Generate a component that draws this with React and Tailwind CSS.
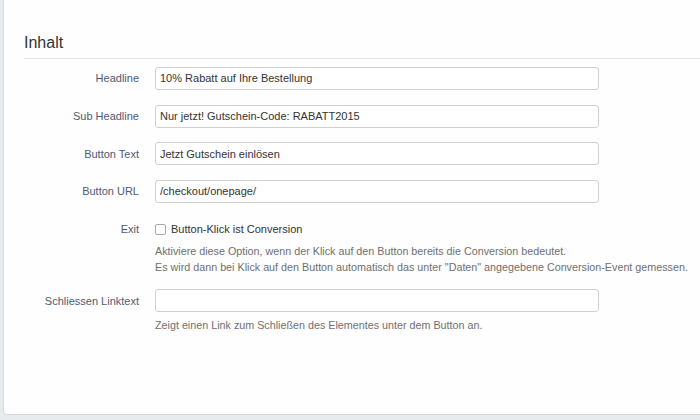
import React from "react";

const font = { fontFamily: '"Liberation Sans", Arial, sans-serif' };

function Row({ label, value }) {
  return (
    <div className="flex items-center">
      <div className="w-[135px] text-right text-[11px] text-[#4f5a72]">{label}</div>
      <div className="ml-[16px] w-[444px] h-[23px] border border-[#d0d0d0] rounded-[3px] bg-white flex items-center pl-[4px] text-[11px] text-[#333]">
        {value}
      </div>
    </div>
  );
}

export default function App() {
  return (
    <div className="w-[700px] h-[420px] bg-[#e8ebee] pl-[3px] pb-[5px] overflow-hidden" style={font}>
      <div className="h-[415px] bg-[#fefefe] border-l border-b border-[#d3dce4] rounded-bl-[4px]">
        <div className="ml-[20px] pt-[34px] pb-[6px] border-b border-[#e6e6e6]">
          <h2 className="text-[16px] leading-[18px] text-[#333] font-normal">Inhalt</h2>
        </div>
        <div className="mt-[8px] flex flex-col gap-[14.7px]">
          <Row label="Headline" value="10% Rabatt auf Ihre Bestellung" />
          <Row label="Sub Headline" value="Nur jetzt! Gutschein-Code: RABATT2015" />
          <Row label="Button Text" value="Jetzt Gutschein einlösen" />
          <Row label="Button URL" value="/checkout/onepage/" />
          <div>
            <div className="flex items-center h-[23px]">
              <div className="w-[135px] text-right text-[11px] text-[#4f5a72]">Exit</div>
              <div className="ml-[16px] flex items-center">
                <span className="w-[11px] h-[11px] border border-[#a9a9a9] rounded-[2px] bg-white"></span>
                <span className="ml-[5px] text-[11px] text-[#333]">Button-Klick ist Conversion</span>
              </div>
            </div>
            <div className="ml-[151px] mt-[2px] text-[10.75px] leading-[16px] text-[#6f6f6f]">
              <div>Aktiviere diese Option, wenn der Klick auf den Button bereits die Conversion bedeutet.</div>
              <div>Es wird dann bei Klick auf den Button automatisch das unter "Daten" angegebene Conversion-Event gemessen.</div>
            </div>
          </div>
          <div>
            <Row label="Schliessen Linktext" value="" />
            <div className="ml-[151px] mt-[5px] text-[10.75px] leading-[16px] text-[#6f6f6f]">
              Zeigt einen Link zum Schließen des Elementes unter dem Button an.
            </div>
          </div>
        </div>
      </div>
    </div>
  );
}
